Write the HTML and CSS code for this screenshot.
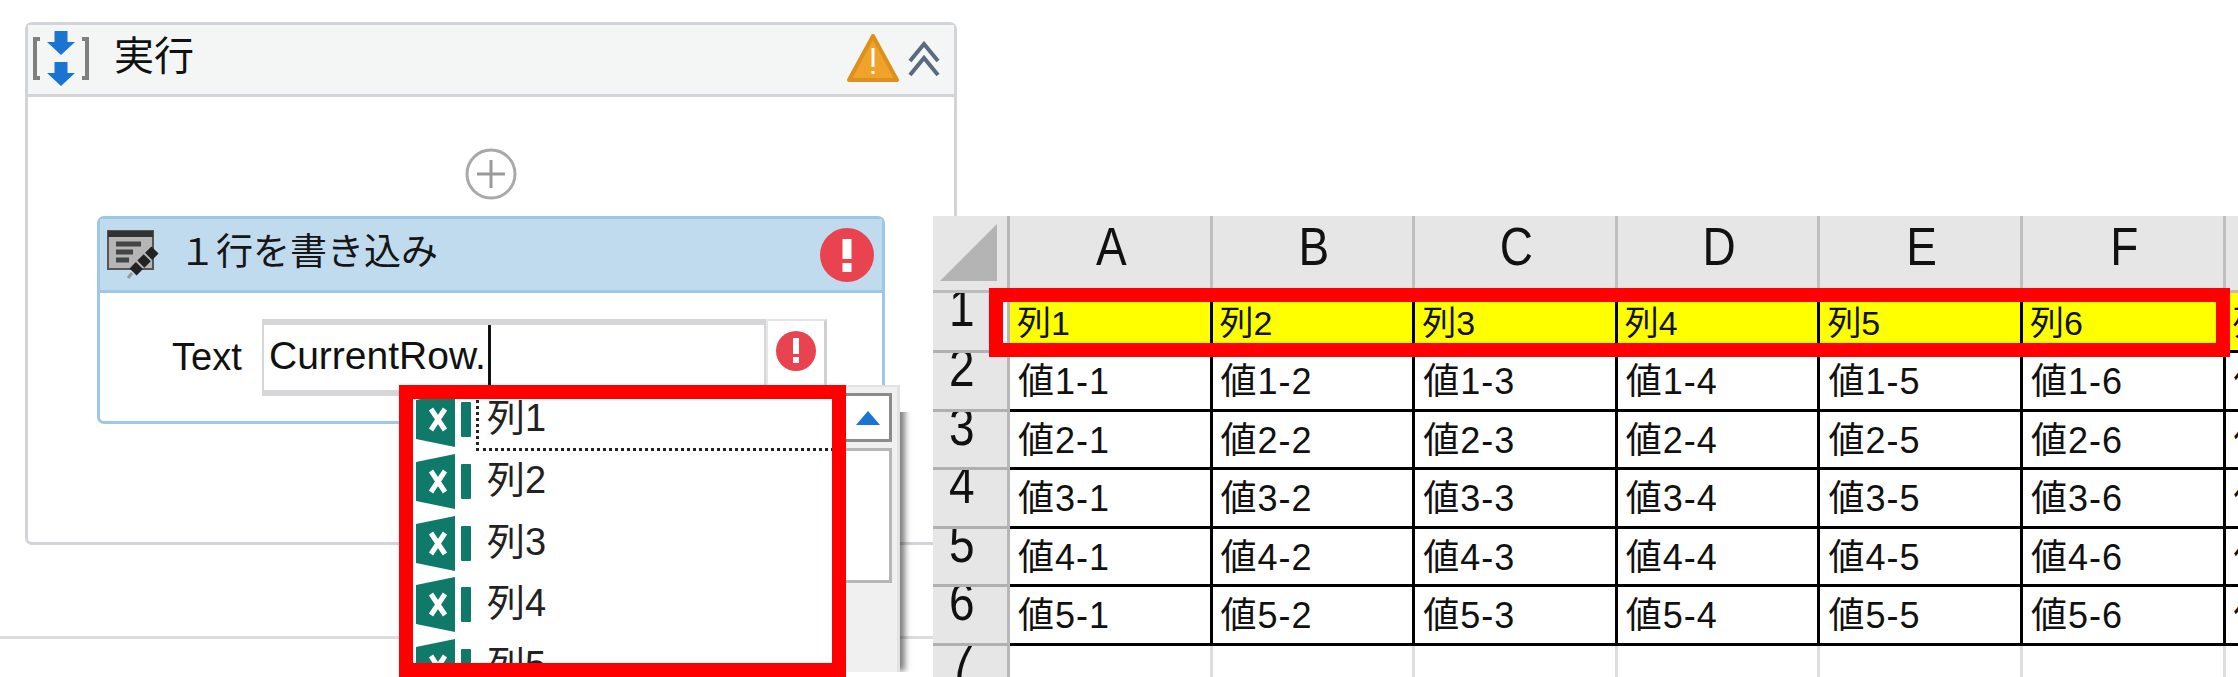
FILE: index.html
```html
<!DOCTYPE html>
<html lang="ja">
<head>
<meta charset="utf-8">
<title>1行を書き込み</title>
<link rel="stylesheet" href="styles.css">
</head>
<body>
<div class="page">
  <div class="left">
    <div class="panel">
      <div class="panel-head">
        <svg class="seq-icon" width="56" height="58" viewBox="0 0 56 58">
          <path d="M7 9H2V48H7M49 9H54V48H49" fill="none" stroke="#7f7f7f" stroke-width="4"/>
          <path d="M21.500 1H34.500V12H42L28 25L14 12H21.500Z" fill="#1b74d2"/>
          <path d="M21.500 32H34.500V43H42L28 56L14 43H21.500Z" fill="#1b74d2"/>
        </svg>
        <span class="panel-title">実行</span>
        <svg class="warn-icon" width="54" height="50" viewBox="0 0 54 50">
          <path d="M27 2L51 46H3Z" fill="#f0a22a" stroke="#dc911d" stroke-width="4" stroke-linejoin="round"/>
          <path d="M27 14V33" stroke="#fff" stroke-width="3"/>
          <path d="M27 37V40" stroke="#fff" stroke-width="3"/>
        </svg>
        <svg class="fold-icon" width="34" height="36" viewBox="0 0 34 36">
          <path d="M3 20L17 3L31 20M3 34L17 17L31 34" fill="none" stroke="#5b6b7f" stroke-width="4"/>
        </svg>
      </div>
      <svg class="add-icon" width="52" height="52" viewBox="0 0 52 52">
        <circle cx="26" cy="26" r="24" fill="#fff" stroke="#a9a9a9" stroke-width="3"/>
        <path d="M26 12V40M12 26H40" stroke="#9a9a9a" stroke-width="3"/>
      </svg>
      <div class="activity">
        <div class="activity-head">
          <svg class="write-icon" width="52" height="50" viewBox="0 0 52 50">
            <rect x="1" y="1" width="45" height="38" fill="#b5b5b5" stroke="#555" stroke-width="2"/>
            <rect x="1" y="1" width="45" height="6" fill="#333"/>
            <path d="M9 14H34M9 22H26M9 30H22" stroke="#444" stroke-width="5"/>
            <path d="M48 20L26 42" stroke="#222" stroke-width="10" stroke-dasharray="9 2"/>
            <path d="M25 43L21 48" stroke="#999" stroke-width="3"/>
          </svg>
          <span class="activity-title">１行を書き込み</span>
          <svg class="error-icon" width="54" height="54" viewBox="0 0 54 54">
            <circle cx="27" cy="27" r="27" fill="#e8434f"/>
            <rect x="22.500" y="11" width="9" height="20" fill="#fff"/>
            <rect x="22.500" y="35" width="9" height="9" fill="#fff"/>
          </svg>
        </div>
        <div class="activity-body">
          <span class="field-label">Text</span>
          <div class="field">
            <div class="field-input"><span>CurrentRow.</span><i class="caret"></i></div>
            <div class="field-error">
              <svg width="40" height="40" viewBox="0 0 40 40">
                <circle cx="20" cy="20" r="20" fill="#e8434f"/>
                <rect x="17" y="7" width="6" height="16" fill="#fff"/>
                <rect x="17" y="26" width="6" height="6" fill="#fff"/>
              </svg>
            </div>
          </div>
        </div>
      </div>
    </div>
    <div class="rule"></div>
  </div>

  <div class="sheet">
    <div class="corner">
      <svg width="58" height="58" viewBox="0 0 58 58"><path d="M57 0V57H0Z" fill="#b4b4b4"/></svg>
    </div>
    <div class="col-head"><span>A</span></div>
    <div class="col-head"><span>B</span></div>
    <div class="col-head"><span>C</span></div>
    <div class="col-head"><span>D</span></div>
    <div class="col-head"><span>E</span></div>
    <div class="col-head"><span>F</span></div>
    <div class="col-head"><span>G</span></div>

    <div class="row-head row-first"><span>1</span></div>
    <div class="cell title">列1</div>
    <div class="cell title">列2</div>
    <div class="cell title">列3</div>
    <div class="cell title">列4</div>
    <div class="cell title">列5</div>
    <div class="cell title">列6</div>
    <div class="cell title">列7</div>

    <div class="row-head"><span>2</span></div>
    <div class="cell">値1-1</div>
    <div class="cell">値1-2</div>
    <div class="cell">値1-3</div>
    <div class="cell">値1-4</div>
    <div class="cell">値1-5</div>
    <div class="cell">値1-6</div>
    <div class="cell">値1-7</div>

    <div class="row-head"><span>3</span></div>
    <div class="cell">値2-1</div>
    <div class="cell">値2-2</div>
    <div class="cell">値2-3</div>
    <div class="cell">値2-4</div>
    <div class="cell">値2-5</div>
    <div class="cell">値2-6</div>
    <div class="cell">値2-7</div>

    <div class="row-head"><span>4</span></div>
    <div class="cell">値3-1</div>
    <div class="cell">値3-2</div>
    <div class="cell">値3-3</div>
    <div class="cell">値3-4</div>
    <div class="cell">値3-5</div>
    <div class="cell">値3-6</div>
    <div class="cell">値3-7</div>

    <div class="row-head"><span>5</span></div>
    <div class="cell">値4-1</div>
    <div class="cell">値4-2</div>
    <div class="cell">値4-3</div>
    <div class="cell">値4-4</div>
    <div class="cell">値4-5</div>
    <div class="cell">値4-6</div>
    <div class="cell">値4-7</div>

    <div class="row-head"><span>6</span></div>
    <div class="cell">値5-1</div>
    <div class="cell">値5-2</div>
    <div class="cell">値5-3</div>
    <div class="cell">値5-4</div>
    <div class="cell">値5-5</div>
    <div class="cell">値5-6</div>
    <div class="cell">値5-7</div>

    <div class="row-head row-last"><span>7</span></div>
    <div class="cell blank"></div>
    <div class="cell blank"></div>
    <div class="cell blank"></div>
    <div class="cell blank"></div>
    <div class="cell blank"></div>
    <div class="cell blank"></div>
    <div class="cell blank"></div>
  </div>

  <!-- completion popup, lies over the activity -->
  <div class="popup">
    <ul class="popup-list">
      <li class="item focus">
        <svg class="xl-icon" width="56" height="55" viewBox="0 0 56 55"><path d="M0 8L39 0V55L0 47Z"/><rect x="45" y="10" width="10" height="35" rx="1"/><path class="xl-x" d="M15 17L29 38M29 17L15 38"/></svg>
        <span class="item-label">列1</span>
      </li>
      <li class="item">
        <svg class="xl-icon" width="56" height="55" viewBox="0 0 56 55"><path d="M0 8L39 0V55L0 47Z"/><rect x="45" y="10" width="10" height="35" rx="1"/><path class="xl-x" d="M15 17L29 38M29 17L15 38"/></svg>
        <span class="item-label">列2</span>
      </li>
      <li class="item">
        <svg class="xl-icon" width="56" height="55" viewBox="0 0 56 55"><path d="M0 8L39 0V55L0 47Z"/><rect x="45" y="10" width="10" height="35" rx="1"/><path class="xl-x" d="M15 17L29 38M29 17L15 38"/></svg>
        <span class="item-label">列3</span>
      </li>
      <li class="item">
        <svg class="xl-icon" width="56" height="55" viewBox="0 0 56 55"><path d="M0 8L39 0V55L0 47Z"/><rect x="45" y="10" width="10" height="35" rx="1"/><path class="xl-x" d="M15 17L29 38M29 17L15 38"/></svg>
        <span class="item-label">列4</span>
      </li>
      <li class="item">
        <svg class="xl-icon" width="56" height="55" viewBox="0 0 56 55"><path d="M0 8L39 0V55L0 47Z"/><rect x="45" y="10" width="10" height="35" rx="1"/><path class="xl-x" d="M15 17L29 38M29 17L15 38"/></svg>
        <span class="item-label">列5</span>
      </li>
    </ul>
    <div class="popup-scroll">
      <div class="scroll-btn"><i class="scroll-arrow"></i></div>
      <div class="scroll-thumb"></div>
    </div>
  </div>

  <!-- red annotation frames -->
  <div class="mark mark-popup"></div>
  <div class="mark mark-row"></div>
</div>
</body>
</html>
```
FILE: styles.css
```css
* { margin: 0; padding: 0; box-sizing: border-box; }
html, body { height: 677px; overflow: hidden; background: #fff; }
body { font-family: "Liberation Sans", "Noto Sans CJK JP", sans-serif; color: #111; }
svg { display: block; flex: none; }

.page { position: relative; display: flex; align-items: flex-start; width: 2238px; height: 677px; overflow: hidden; }
.left { width: 957px; flex: none; }
.rule { height: 3px; margin-top: 91px; background: #dcdcdf; }

/* sequence panel */
.panel { display: flex; flex-direction: column; align-items: center; width: 932px; height: 523px; margin: 22px 0 0 25px; border: 3px solid #d3d4d9; border-radius: 7px; }
.panel-head { display: flex; align-items: center; width: 100%; height: 72px; padding: 0 13px 0 5px; background: #f4f6f6; border-bottom: 3px solid #d3d4d9; }
.seq-icon { margin-top: -1px; }
.panel-title { margin-left: 25px; margin-top: -8px; font-size: 40px; line-height: 48px; }
.warn-icon { margin-left: auto; margin-top: -1px; }
.fold-icon { margin-left: 7px; margin-top: -2px; }
.add-icon { margin-top: 51px; }

.activity { width: 788px; height: 208px; margin-top: 16px; border: 3px solid #9dc7e7; border-radius: 7px; }
.activity-head { display: flex; align-items: center; height: 74px; padding: 0 8px 0 7px; background: #c0daee; border-bottom: 3px solid #9dc7e7; }
.activity-title { margin-left: 20px; margin-top: -4px; font-size: 37px; line-height: 46px; color: #161616; }
.error-icon { margin-left: auto; }
.activity-body { display: flex; align-items: flex-start; padding: 26px 0 0 72px; }
.field-label { width: 73px; margin-top: 15px; font-size: 38px; line-height: 46px; }
.field { display: flex; width: 565px; height: 77px; margin-left: 17px; }
.field-input { display: flex; flex: 1; padding: 5px 0 0 5px; border: 2px solid #d6d6d9; border-top-width: 6px; border-bottom-width: 6px; font-size: 39px; line-height: 52px; }
.caret { width: 3px; height: 65px; margin: -5px 0 0 2px; background: #111; }
.field-error { display: flex; justify-content: center; width: 61px; padding-top: 10px; border: 2px solid #e6e6e8; border-right: 3px solid #d0d0d4; border-bottom: 0; }

/* excel sheet */
.sheet { display: grid; grid-template-columns: 77px repeat(7, 202.6px); grid-template-rows: 77px 60px repeat(5, 58.5px) 32px; width: 1305px; flex: none; margin: 216px 0 0 -24px; overflow: hidden; background: #fff; }
.corner { display: flex; align-items: flex-start; padding: 8px 0 0 7px; background: #e6e6e6; border-right: 3px solid #b7b7b7; border-bottom: 3px solid #bcbcbc; }
.col-head { display: flex; justify-content: center; padding: 5px 0 0 3px; background: #e6e6e6; border-right: 3px solid #bfbfbf; border-bottom: 3px solid #bcbcbc; font-size: 46px; line-height: 55px; }
.col-head span { display: block; transform: scaleY(1.15); }
.row-head { padding-left: 16px; background: #e6e6e6; border-right: 3px solid #b7b7b7; border-bottom: 3px solid #b0b0b0; overflow: hidden; font-size: 46px; line-height: 34px; }
.row-head span { display: block; width: 26px; transform: scaleY(1.15); transform-origin: 0 32px; }
.row-first { background: linear-gradient(to right, #e6e6e6 70px, #f6f6f6 70px); }
.row-last { border-bottom: 0; }
.cell { padding: 1px 0 0 8px; border-right: 3px solid #000; border-bottom: 3px solid #000; overflow: hidden; white-space: nowrap; font-size: 36px; line-height: 56px; letter-spacing: 1px; }
.title { background: #ff0; font-size: 34px; line-height: 54px; letter-spacing: 0; padding: 3px 0 0 7px; }
.blank { border-right: 3px solid #dedede; border-bottom: 0; }

/* completion popup, the shadow runs only down the right side and stops at the bottom edge */
.popup { position: absolute; left: 399px; top: 385px; display: flex; width: 501px; height: 287px; padding-top: 2px; background: #f0f0f0; border-top: 2px solid #e2e2e2; border-right: 3px solid #e2e2e2; box-shadow: 6px 0 6px -1px rgba(0, 0, 0, .5); clip-path: polygon(0 0, 100% 0, 100% 27px, calc(100% + 14px) 27px, calc(100% + 14px) 100%, 0 100%); }
.popup-list { width: 447px; flex: none; height: 285px; list-style: none; overflow: hidden; background: #fff; }
.item { display: flex; align-items: center; height: 61.7px; padding-left: 17px; }
.xl-icon { fill: #0f7a69; }
.xl-x { fill: none; stroke: #fff; stroke-width: 5; }
.item-label { display: block; flex: 1; margin-left: 4px; padding-left: 8px; font-size: 38px; line-height: 60px; color: #222; border: 3px dotted transparent; border-width: 0 0 3px 3px; }
.focus .item-label { border-color: #222; }

.popup-scroll { width: 46px; flex: none; }
.scroll-btn { display: flex; align-items: center; justify-content: center; height: 49px; margin-top: 4px; background: #fff; border: 3px solid #8c8c8c; border-left: 0; }
.scroll-arrow { width: 0; height: 0; border: 12px solid transparent; border-top: 0; border-bottom: 14px solid #1b74d2; }
.scroll-thumb { height: 135px; margin-top: 6px; background: #fff; border: 3px solid #b7b7b7; border-left: 0; }

/* annotation */
.mark { position: absolute; border: 14px solid #f00; }
.mark-popup { left: 399px; top: 385px; width: 447px; height: 292px; }
.mark-row { left: 989px; top: 288px; width: 1241px; height: 69px; }
```
